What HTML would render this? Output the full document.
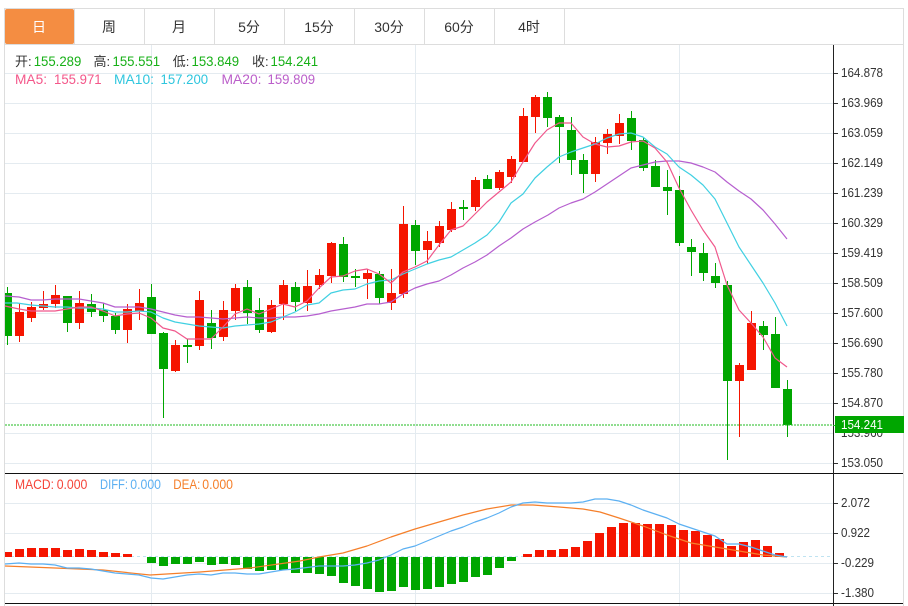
<!DOCTYPE html>
<html><head><meta charset="utf-8"><style>
html,body{margin:0;padding:0;background:#fff;width:908px;height:606px;overflow:hidden}
svg{display:block;font-family:"Liberation Sans","Noto Sans CJK SC",sans-serif}
.t{font-size:14px;fill:#333;text-anchor:middle}
.a{font-size:12.6px;fill:#333}
.l{font-size:13px}
.n{font-size:13.8px}
</style></head><body>
<svg width="908" height="606" viewBox="0 0 908 606" xmlns="http://www.w3.org/2000/svg">
<rect x="4" y="8" width="900" height="1" fill="#ddd"/>
<rect x="4" y="44" width="900" height="1" fill="#ddd"/>
<rect x="4" y="8" width="1" height="598" fill="#ddd"/>
<rect x="903" y="8" width="1" height="598" fill="#ddd"/>
<path fill="#ddd" d="M74 9h1v35h-1zM144 9h1v35h-1zM214 9h1v35h-1zM284 9h1v35h-1zM354 9h1v35h-1zM424 9h1v35h-1zM494 9h1v35h-1zM564 9h1v35h-1z"/>
<rect x="5" y="9" width="69" height="35" rx="2" fill="#f48d42"/>
<text class="t" x="39" y="32" style="fill:#fff">日</text>
<text class="t" x="109" y="32">周</text>
<text class="t" x="179" y="32">月</text>
<text class="t" x="249" y="32">5分</text>
<text class="t" x="319" y="32">15分</text>
<text class="t" x="389" y="32">30分</text>
<text class="t" x="459" y="32">60分</text>
<text class="t" x="529" y="32">4时</text>
<path fill="#e4ebf0" d="M5 73h828v1H5zM5 103h828v1H5zM5 133h828v1H5zM5 163h828v1H5zM5 193h828v1H5zM5 223h828v1H5zM5 253h828v1H5zM5 283h828v1H5zM5 313h828v1H5zM5 343h828v1H5zM5 373h828v1H5zM5 403h828v1H5zM5 433h828v1H5zM5 463h828v1H5zM5 503h828v1H5zM5 533h828v1H5zM5 563h828v1H5zM5 593h828v1H5zM151 45h1v561h-1zM415 45h1v561h-1zM679 45h1v561h-1z"/>
<path fill="#f51500" d="M19 303h1v39h-1zM15 312h9v24h-9zM31 302h1v20h-1zM27 307h9v11h-9zM43 291h1v19h-1zM39 304h9v4h-9zM55 285h1v23h-1zM51 295h9v9h-9zM79 291h1v38h-1zM75 303h9v20h-9zM127 304h1v39h-1zM123 309h9v21h-9zM139 289h1v31h-1zM135 303h9v8h-9zM175 340h1v32h-1zM171 345h9v26h-9zM199 291h1v59h-1zM195 300h9v46h-9zM223 301h1v40h-1zM219 310h9v27h-9zM235 284h1v36h-1zM231 288h9v23h-9zM271 300h1v33h-1zM267 305h9v27h-9zM283 280h1v40h-1zM279 285h9v19h-9zM307 270h1v41h-1zM303 286h9v17h-9zM319 269h1v20h-1zM315 275h9v10h-9zM331 242h1v41h-1zM327 243h9v33h-9zM367 269h1v30h-1zM363 273h9v6h-9zM391 269h1v41h-1zM387 293h9v10h-9zM403 206h1v92h-1zM399 224h9v70h-9zM427 231h1v33h-1zM423 241h9v9h-9zM439 221h1v26h-1zM435 226h9v17h-9zM451 202h1v30h-1zM447 209h9v21h-9zM475 177h1v34h-1zM471 180h9v27h-9zM499 170h1v20h-1zM495 172h9v16h-9zM511 156h1v27h-1zM507 159h9v18h-9zM523 108h1v54h-1zM519 116h9v46h-9zM535 95h1v38h-1zM531 97h9v20h-9zM595 137h1v45h-1zM591 142h9v32h-9zM607 129h1v25h-1zM603 134h9v9h-9zM619 114h1v30h-1zM615 123h9v13h-9zM739 363h1v74h-1zM735 365h9v16h-9zM751 311h1v59h-1zM747 323h9v47h-9z"/>
<path fill="#00a600" d="M7 287h1v58H7zM5 293h7v43H5zM67 296h1v36h-1zM63 296h9v27h-9zM91 294h1v23h-1zM87 304h9v8h-9zM103 303h1v19h-1zM99 310h9v6h-9zM115 313h1v21h-1zM111 316h9v14h-9zM151 284h1v50h-1zM147 297h9v37h-9zM163 332h1v86h-1zM159 333h9v36h-9zM187 339h1v24h-1zM183 345h9v2h-9zM211 310h1v39h-1zM207 323h9v15h-9zM247 280h1v44h-1zM243 287h9v26h-9zM259 298h1v35h-1zM255 310h9v20h-9zM295 282h1v29h-1zM291 287h9v15h-9zM343 237h1v45h-1zM339 244h9v33h-9zM355 269h1v18h-1zM351 276h9v2h-9zM379 271h1v33h-1zM375 274h9v24h-9zM415 220h1v45h-1zM411 225h9v26h-9zM463 200h1v20h-1zM459 207h9v2h-9zM487 175h1v14h-1zM483 179h9v10h-9zM547 92h1v35h-1zM543 97h9v21h-9zM559 115h1v48h-1zM555 117h9v10h-9zM571 117h1v58h-1zM567 130h9v30h-9zM583 154h1v39h-1zM579 160h9v14h-9zM631 111h1v39h-1zM627 118h9v23h-9zM643 138h1v33h-1zM639 140h9v28h-9zM655 160h1v27h-1zM651 166h9v21h-9zM667 170h1v45h-1zM663 187h9v4h-9zM679 176h1v70h-1zM675 190h9v53h-9zM691 239h1v37h-1zM687 247h9v5h-9zM703 243h1v38h-1zM699 253h9v20h-9zM715 263h1v25h-1zM711 276h9v7h-9zM727 281h1v179h-1zM723 285h9v96h-9zM763 321h1v29h-1zM759 326h9v9h-9zM775 317h1v71h-1zM771 334h9v54h-9zM787 380h1v57h-1zM783 389h9v36h-9z"/>
<g fill="none" stroke-width="1.2" stroke-linejoin="round">
<polyline stroke="#b65fcf" points="5,296 19,297 31,300 43,300 55,299 67,299 79,299 91,301 103,303 115,307 127,307 139,307 151,309 163,312 175,315 187,317 199,317 211,318 223,319 235,318 247,317 259,318 271,318 283,317 295,317 307,316 319,314 331,311 343,309 355,307 367,304 379,304 391,302 403,294 415,288 427,284 439,281 451,275 463,268 475,262 487,255 499,246 511,238 523,229 535,222 548,215 559,208 571,203 583,199 595,192 607,184 619,176 631,168 643,165 655,162 667,161 679,161 691,163 703,167 715,172 727,182 739,191 751,199 763,210 775,224 787,239"/>
<polyline stroke="#41d0e2" points="5,303 17,303 31,305 43,306 55,307 67,307 79,308 91,308 103,309 115,312 127,312 139,311 151,312 163,318 175,322 187,324 199,326 211,327 223,328 235,326 247,325 259,324 271,322 283,317 295,312 307,305 319,303 331,293 343,290 355,289 367,284 379,281 391,280 403,274 415,269 427,264 439,260 451,257 463,250 475,243 487,235 499,222 511,203 523,194 535,178 547,167 559,157 571,152 583,148 595,144 607,138 619,134 631,133 643,137 655,147 667,154 679,167 691,175 703,185 715,199 727,223 739,247 751,265 763,283 775,303 787,326"/>
<polyline stroke="#f0588c" points="5,306 19,309 31,311 43,311 55,311 67,309 79,307 91,307 103,311 115,316 127,314 139,313 151,318 163,328 175,331 187,339 199,339 211,339 223,327 235,314 247,309 259,314 271,309 283,304 295,307 307,301 319,288 331,277 343,276 355,271 367,269 379,274 391,283 403,272 415,267 427,261 439,245 451,230 463,226 475,214 487,202 499,192 511,182 523,162 535,143 547,130 559,123 571,123 583,137 595,144 607,147 619,146 631,142 643,141 655,148 667,162 679,188 691,210 703,230 715,247 727,285 739,310 751,323 763,337 775,358 787,367"/>
</g>
<line x1="5" y1="425" x2="833" y2="425" stroke="#22bb22" stroke-width="1" stroke-dasharray="2 1"/>
<line x1="5" y1="556.5" x2="833" y2="556.5" stroke="#bfe3f1" stroke-width="1" stroke-dasharray="3 3"/>
<path fill="#f51500" d="M15 549h9v8h-9zM27 548h9v9h-9zM39 548h9v9h-9zM51 548h9v9h-9zM63 550h9v7h-9zM75 549h9v8h-9zM87 550h9v7h-9zM99 552h9v5h-9zM111 553h9v4h-9zM123 554h9v3h-9zM5 552h7v5H5zM523 554h9v3h-9zM535 550h9v7h-9zM547 550h9v7h-9zM559 549h9v8h-9zM571 547h9v10h-9zM583 541h9v16h-9zM595 533h9v24h-9zM607 527h9v30h-9zM619 523h9v34h-9zM631 523h9v34h-9zM643 524h9v33h-9zM655 524h9v33h-9zM667 525h9v32h-9zM679 530h9v27h-9zM691 531h9v26h-9zM703 535h9v22h-9zM715 539h9v18h-9zM727 546h9v11h-9zM739 542h9v15h-9zM751 540h9v17h-9zM763 546h9v11h-9zM775 553h9v4h-9z"/>
<path fill="#00a600" d="M147 557h9v6h-9zM159 557h9v9h-9zM171 557h9v7h-9zM183 557h9v7h-9zM195 557h9v5h-9zM207 557h9v8h-9zM219 557h9v7h-9zM231 557h9v8h-9zM243 557h9v12h-9zM255 557h9v14h-9zM267 557h9v13h-9zM279 557h9v13h-9zM291 557h9v16h-9zM303 557h9v16h-9zM315 557h9v17h-9zM327 557h9v19h-9zM339 557h9v26h-9zM351 557h9v29h-9zM363 557h9v32h-9zM375 557h9v35h-9zM387 557h9v34h-9zM399 557h9v30h-9zM411 557h9v33h-9zM423 557h9v32h-9zM435 557h9v30h-9zM447 557h9v27h-9zM459 557h9v25h-9zM471 557h9v20h-9zM483 557h9v18h-9zM495 557h9v11h-9zM507 557h9v4h-9z"/>
<g fill="none" stroke-width="1.2" stroke-linejoin="round">
<polyline stroke="#f57f2a" points="5,566 55,568 103,570 150,575 200,572 250,568 300,561 319,557 343,553 367,546 391,537 415,529 439,522 463,515 487,509 511,505 533,505 559,507 583,509 600,512 619,518 643,526 667,535 691,543 715,547 739,551 763,555 787,557"/>
<polyline stroke="#5cb0f2" points="5,564 19,563 31,564 43,564 55,565 67,568 79,568 91,569 103,571 115,573 127,574 139,575 151,578 163,579 175,577 187,575 199,574 211,575 223,573 235,573 247,574 259,574 271,572 283,570 295,569 303,568 319,566 331,566 343,566 355,565 367,563 379,560 391,555 403,549 415,546 427,541 439,536 451,531 463,527 475,522 487,518 499,513 511,507 523,503 535,502 547,503 559,503 571,503 583,502 595,499 607,499 619,501 631,505 643,510 655,514 667,518 679,524 691,528 703,532 715,536 727,544 739,544 751,547 763,551 775,555 787,557"/>
</g>
<rect x="5" y="473" width="898" height="1" fill="#111"/>
<rect x="5" y="603" width="898" height="1" fill="#111"/>
<rect x="833" y="45" width="1" height="561" fill="#222"/>
<path fill="#333" d="M834 73h4v1h-4zM834 103h4v1h-4zM834 133h4v1h-4zM834 163h4v1h-4zM834 193h4v1h-4zM834 223h4v1h-4zM834 253h4v1h-4zM834 283h4v1h-4zM834 313h4v1h-4zM834 343h4v1h-4zM834 373h4v1h-4zM834 403h4v1h-4zM834 463h4v1h-4zM834 503h4v1h-4zM834 533h4v1h-4zM834 563h4v1h-4zM834 593h4v1h-4z"/>
<text class="a" x="841" y="77" textLength="42" lengthAdjust="spacingAndGlyphs">164.878</text>
<text class="a" x="841" y="107" textLength="42" lengthAdjust="spacingAndGlyphs">163.969</text>
<text class="a" x="841" y="137" textLength="42" lengthAdjust="spacingAndGlyphs">163.059</text>
<text class="a" x="841" y="167" textLength="42" lengthAdjust="spacingAndGlyphs">162.149</text>
<text class="a" x="841" y="197" textLength="42" lengthAdjust="spacingAndGlyphs">161.239</text>
<text class="a" x="841" y="227" textLength="42" lengthAdjust="spacingAndGlyphs">160.329</text>
<text class="a" x="841" y="257" textLength="42" lengthAdjust="spacingAndGlyphs">159.419</text>
<text class="a" x="841" y="287" textLength="42" lengthAdjust="spacingAndGlyphs">158.509</text>
<text class="a" x="841" y="317" textLength="42" lengthAdjust="spacingAndGlyphs">157.600</text>
<text class="a" x="841" y="347" textLength="42" lengthAdjust="spacingAndGlyphs">156.690</text>
<text class="a" x="841" y="377" textLength="42" lengthAdjust="spacingAndGlyphs">155.780</text>
<text class="a" x="841" y="407" textLength="42" lengthAdjust="spacingAndGlyphs">154.870</text>
<text class="a" x="841" y="437" textLength="42" lengthAdjust="spacingAndGlyphs">153.960</text>
<text class="a" x="841" y="467" textLength="42" lengthAdjust="spacingAndGlyphs">153.050</text>
<text class="a" x="841" y="507" textLength="29" lengthAdjust="spacingAndGlyphs">2.072</text>
<text class="a" x="841" y="537" textLength="29" lengthAdjust="spacingAndGlyphs">0.922</text>
<text class="a" x="841" y="567" textLength="33" lengthAdjust="spacingAndGlyphs">-0.229</text>
<text class="a" x="841" y="597" textLength="33" lengthAdjust="spacingAndGlyphs">-1.380</text>
<rect x="835" y="416" width="69" height="17" fill="#00a600"/>
<rect x="833" y="425" width="2" height="1" fill="#22bb22"/>
<text class="a" x="841" y="429" textLength="42" lengthAdjust="spacingAndGlyphs" style="fill:#fff">154.241</text>
<g class="l">
<text x="15" y="66" fill="#333">开:</text><text class="n" x="33.7" y="66" fill="#17b017" textLength="47.6" lengthAdjust="spacingAndGlyphs">155.289</text>
<text x="93.5" y="66" fill="#333">高:</text><text class="n" x="112.5" y="66" fill="#17b017" textLength="47.6" lengthAdjust="spacingAndGlyphs">155.551</text>
<text x="172.7" y="66" fill="#333">低:</text><text class="n" x="191.5" y="66" fill="#17b017" textLength="47.6" lengthAdjust="spacingAndGlyphs">153.849</text>
<text x="252" y="66" fill="#333">收:</text><text class="n" x="270.5" y="66" fill="#17b017" textLength="47.6" lengthAdjust="spacingAndGlyphs">154.241</text>
<text class="n" x="15" y="84" fill="#f4578a" textLength="32" lengthAdjust="spacingAndGlyphs">MA5:</text><text class="n" x="54" y="84" fill="#f4578a" textLength="47.6" lengthAdjust="spacingAndGlyphs">155.971</text>
<text class="n" x="114" y="84" fill="#2fc6de" textLength="40" lengthAdjust="spacingAndGlyphs">MA10:</text><text class="n" x="160.5" y="84" fill="#2fc6de" textLength="47.6" lengthAdjust="spacingAndGlyphs">157.200</text>
<text class="n" x="221.5" y="84" fill="#bb5fca" textLength="40" lengthAdjust="spacingAndGlyphs">MA20:</text><text class="n" x="267.5" y="84" fill="#bb5fca" textLength="47.6" lengthAdjust="spacingAndGlyphs">159.809</text>
<text class="n" x="15" y="489" fill="#f5453a" textLength="39" lengthAdjust="spacingAndGlyphs">MACD:</text><text class="n" x="56.7" y="489" fill="#f5453a" textLength="30.7" lengthAdjust="spacingAndGlyphs">0.000</text>
<text class="n" x="100" y="489" fill="#5cb0f2" textLength="28" lengthAdjust="spacingAndGlyphs">DIFF:</text><text class="n" x="130.3" y="489" fill="#5cb0f2" textLength="30.7" lengthAdjust="spacingAndGlyphs">0.000</text>
<text class="n" x="173.3" y="489" fill="#f57f2a" textLength="27" lengthAdjust="spacingAndGlyphs">DEA:</text><text class="n" x="202.3" y="489" fill="#f57f2a" textLength="30.7" lengthAdjust="spacingAndGlyphs">0.000</text>
</g>
</svg>
</body></html>
